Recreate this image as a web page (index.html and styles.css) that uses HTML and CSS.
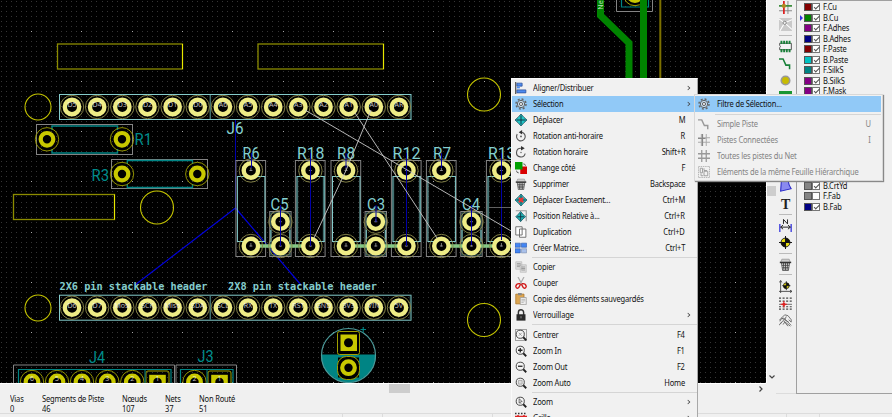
FILE: index.html
```html
<!DOCTYPE html>
<html lang="fr">
<head>
<meta charset="utf-8">
<title>Pcbnew</title>
<link rel="stylesheet" href="styles.css">
</head>
<body>
<svg class="defs" width="0" height="0">
  <symbol id="gear" viewBox="0 0 16 16"><circle cx="8" cy="8" r="6.700" fill="none" stroke="#666" stroke-width="2" stroke-dasharray="2.630 2.630"/><circle cx="8" cy="8" r="4.900" fill="#e4e4e4" fill-opacity=".6" stroke="#555" stroke-width="1.2"/><circle cx="8" cy="8" r="2.100" fill="#f0f0f0" stroke="#555" stroke-width="1.2"/></symbol>
  <symbol id="align" viewBox="0 0 16 16"><path d="M1 0V16" stroke="#333" stroke-width="1.4"/><path d="M2.500 1.500h7v4h-7zM2.500 10.500h12v4h-12z" fill="#4d8bf0" stroke="#2c4f96"/><path d="M2.500 7.500h4" stroke="#4d8bf0" stroke-width="2"/></symbol>
  <symbol id="move" viewBox="0 0 16 16"><path d="M8 0l4 4.500L16 8l-4 3.500L8 16l-4-4.500L0 8l4-3.500z" fill="#22c5c5" stroke="#145" stroke-width="1"/><path d="M8 2v12M2 8h12" stroke="#134" stroke-width="1.3"/></symbol>
  <symbol id="movex" viewBox="0 0 16 16"><use href="#move"/><path d="M5 5l6 6M11 5l-6 6" stroke="#e33" stroke-width="2.4"/></symbol>
  <symbol id="movrel" viewBox="0 0 16 16"><path d="M1 1h14v14" fill="none" stroke="#999" stroke-width="1.5"/><path d="M7.500 2l3 3.500L14 9l-3.500 3-3 3.500-3-3.500L1 9l3.500-3.500z" fill="#22b5b5" stroke="#145"/><path d="M7.500 4v10M3 9h9" stroke="#134" stroke-width="1.2"/></symbol>
  <symbol id="ccw" viewBox="0 0 16 16"><path d="M3 5.500A5.800 5.800 0 1 0 9 3" fill="none" stroke="#555" stroke-width="1.5"/><path d="M9.500 0v6L5 3z" fill="#333"/><circle cx="8" cy="8.500" r="1.200" fill="#555"/></symbol>
  <symbol id="cw" viewBox="0 0 16 16"><path d="M8 3A5.800 5.800 0 1 0 13.500 10" fill="none" stroke="#555" stroke-width="1.5"/><path d="M8 0v6l5-3z" fill="#333"/><circle cx="8" cy="8.500" r="1" fill="#666"/></symbol>
  <symbol id="flip" viewBox="0 0 16 16"><path d="M7 6h9v10H7z" fill="#d80000"/><path d="M0 0h10v10H0z" fill="#00a000"/><path d="M11 2.500q3 0 3 2.500M2 11.500q0 3 3 3" fill="none" stroke="#333"/></symbol>
  <symbol id="trash" viewBox="0 0 16 16"><path d="M2 5.500L3.500 1.500h9L14 5.500z" fill="#ccc" stroke="#999"/><path d="M3 6h10l-1.500 9.500h-7z" fill="#e8e8e8" stroke="#444"/><path d="M1 5.500h14" stroke="#333" stroke-width="1.8"/><path d="M5.500 6l.6 9M8 6v9M10.500 6l-.6 9M3.500 9h9M4 12h8" stroke="#444" stroke-width="1.1"/></symbol>
  <symbol id="dup" viewBox="0 0 16 16"><path d="M1 1h8.500v11H1zM6 4h8.500v11H6z" fill="#fff" stroke="#666" stroke-width="1.2"/></symbol>
  <symbol id="array" viewBox="0 0 16 16"><path d="M0 1.500h7v5.500H0zM8.500 1.500h7v5.500h-7zM0 9h7v5.500H0z" fill="#4285f4" stroke="#2a56a8" stroke-width=".8"/><path d="M8.500 9h7v5.500h-7z" fill="#a9c0ea" stroke="#7788aa" stroke-width=".8"/></symbol>
  <symbol id="copy" viewBox="0 0 16 16"><path d="M1 1h8v10H1zM7 5h8v10H7z" fill="#ddd" stroke="#bbb"/><path d="M2.500 3.500h5M2.500 5.500h5M2.500 7.500h4M8.500 8h5M8.500 10h5M8.500 12h5" stroke="#888"/></symbol>
  <symbol id="cut" viewBox="0 0 16 16"><path d="M4 0l5.500 10M12 0L6.500 10" stroke="#aaa" stroke-width="1.6"/><path d="M7 9q-5-1-6 3.500 1 4 4 1.500L7.500 9.500M9 9q5-1 6 3.500-1 4-4 1.500L8.500 9.500" fill="none" stroke="#d01818" stroke-width="1.8"/></symbol>
  <symbol id="paste" viewBox="0 0 16 16"><path d="M1 1.500h11v13H1z" fill="#dca550" stroke="#a87428"/><path d="M4 0h5v3H4z" fill="#888"/><path d="M7 6h8v9.500H7z" fill="#eee" stroke="#999"/><path d="M8.500 8.500h5M8.500 10.500h5M8.500 12.500h3" stroke="#aaa"/></symbol>
  <symbol id="lock" viewBox="0 0 16 16"><path d="M4.500 8V4.500a3.500 3.500 0 0 1 7 0V8" fill="none" stroke="#333" stroke-width="1.9"/><path d="M2 7h12v8.500H2z" fill="#2a2a2a"/><path d="M8 9.500v3" stroke="#999" stroke-width="1.2"/></symbol>
  <symbol id="lens" viewBox="0 0 16 16"><circle cx="7" cy="7" r="5.400" fill="#f4f4f4" stroke="#444" stroke-width="1.300"/><path d="M11 11l4 4" stroke="#222" stroke-width="2.400"/></symbol>
  <symbol id="zcenter" viewBox="0 0 16 16"><path d="M.5.500h15v15H.5z" fill="none" stroke="#777"/><use href="#lens"/><path d="M5 5l4 4M9 5l-4 4" stroke="#888"/></symbol>
  <symbol id="zin" viewBox="0 0 16 16"><use href="#lens"/><path d="M4 7h6M7 4v6" stroke="#222" stroke-width="1.700"/></symbol>
  <symbol id="zout" viewBox="0 0 16 16"><use href="#lens"/><path d="M4 7h6" stroke="#222" stroke-width="1.700"/></symbol>
  <symbol id="zauto" viewBox="0 0 16 16"><use href="#lens"/><path d="M4.500 4.500h5v5h-5z" fill="#ddd" stroke="#999"/></symbol>
  <symbol id="zsel" viewBox="0 0 16 16"><use href="#lens"/><path d="M5.500 3.500v6l1.500-1.200 1 2M5.500 3.500l4 4H7.500" fill="none" stroke="#444"/></symbol>
  <symbol id="gridred" viewBox="0 0 16 16"><path d="M0 2h16" stroke="#333" stroke-width="2" stroke-dasharray="2 2"/><path d="M0 6h16M4 4v10M12 4v10" stroke="#d22" stroke-width="2"/></symbol>
  <symbol id="seg" viewBox="0 0 16 16"><path d="M0 2.500h5l3.500 7.500h4.500v5" fill="none" stroke="currentColor" stroke-width="1.900"/></symbol>
  <symbol id="cross" viewBox="0 0 16 16"><path d="M4.500 0v16M0 11h16M11 0v16M0 5h16" stroke="#aaa" stroke-width="1.300"/><path d="M6 0v16M0 6h10" stroke="#888" stroke-width="1.600"/></symbol>
  <symbol id="hash" viewBox="0 0 16 16"><path d="M5 0v16M11 0v16M0 5h16M0 11h16" stroke="#999" stroke-width="1.700"/></symbol>
  <symbol id="sheet" viewBox="0 0 16 16"><path d="M.5.500h15v15H.5z" fill="none" stroke="#999" stroke-dasharray="2 1"/><path d="M3 3h3v6H3zM8 7h5v6H8zM8 3v3h4M4 10v3h3" fill="none" stroke="#999" stroke-width="1.200"/></symbol>
</svg>

<div class="window">
  <div class="workspace">
    <div class="editor">
      <svg id="board" class="board" width="766" height="383" viewBox="0 0 766 383"></svg>
      <div class="hscroll"><span class="hthumb"></span><svg class="arrow-r" viewBox="0 0 6 6"><path d="M1.500 .5L4 3 1.500 5.500" fill="none" stroke="#444" stroke-width="1.200"/></svg></div>
    </div>
    <div class="vscroll"><span class="vthumb"></span><svg class="arrow-d" viewBox="0 0 6 6"><path d="M.5 1.500L3 4 5.500 1.500" fill="none" stroke="#444" stroke-width="1.200"/></svg></div>
    <div class="tools">
      <svg class="tool" viewBox="0 0 16 16"><path d="M0 6h16M0 12h16M11 0v16" stroke="#888" stroke-width="1.200"/><path d="M6 0v16" stroke="#d22" stroke-width="2.200"/><path d="M0 6h16" stroke="#2a8a2a" stroke-width="1.800"/><circle cx="6" cy="6" r="2.600" fill="#b08a20"/></svg>
      <svg class="tool t-rats" viewBox="0 0 16 16"><path d="M0 0h16v16H0z" fill="#cacaca"/><path d="M7 6L0 1M7 6l9-4M7 6L1 16M7 6l9 8" stroke="#fff" stroke-width="1.300"/><circle cx="7" cy="6" r="2" fill="#eee" stroke="#777"/></svg>
      <i class="rule r1"></i>
      <svg class="tool t-chip" viewBox="0 0 16 16"><path d="M.8 4h14.400v8H.8V9.500q2-1.500 0-3z" fill="#f4f4f4" stroke="#555" stroke-width="1.200"/><path d="M3 1v4M6.300 1v4M9.600 1v4M13 1v4M3 11v4M6.300 11v4M9.600 11v4M13 11v4" stroke="#188038" stroke-width="2.300"/></svg>
      <svg class="tool t-seg" viewBox="0 0 16 16"><use href="#seg"/></svg>
      <svg class="tool t-via" viewBox="0 0 16 16"><circle cx="8" cy="8" r="5.200" fill="#c8bc00" stroke="#999" stroke-width="2"/></svg>
      <svg class="tool t-zone" viewBox="0 0 16 16"><path d="M0 0h16v16H0z" fill="#1a9632"/><path d="M3 6l5-2 5 3v9H3z" fill="#bde0c0"/></svg>
      <svg class="tool t-poly" viewBox="0 0 16 16"><path d="M3 1h8q1 7 4 11L2 15z" fill="#8a8af0" stroke="#2828c8" stroke-width="1.300"/></svg>
      <b class="t-text">T</b>
      <i class="rule r2"></i>
      <svg class="tool t-dim" viewBox="0 0 16 16"><path d="M1 6v10M15 6v10" stroke="#4c4ce0" stroke-width="1.800"/><path d="M2 10h12M5 7.500L2 10l3 2.500M11 7.500l3 2.500-3 2.500" fill="none" stroke="#222" stroke-width="1.200"/><path d="M5.500 6V.5l5 5.500V.5" fill="none" stroke="#222" stroke-width="1.200"/></svg>
      <svg class="tool t-target" viewBox="0 0 16 16"><circle cx="8" cy="8" r="5.500" fill="#e8dc10" stroke="#222" stroke-width="1.200"/><path d="M8 8V2.500A5.500 5.500 0 0 1 13.500 8zM8 8v5.500A5.500 5.500 0 0 1 2.500 8z" fill="#111"/><path d="M8 0v16M0 8h16" stroke="#111" stroke-width="1.200"/></svg>
      <i class="rule r3"></i>
      <svg class="tool t-trash" viewBox="0 0 16 16"><use href="#trash"/></svg>
      <i class="rule r4"></i>
      <svg class="tool t-axis" viewBox="0 0 16 16"><path d="M2 16V1M0 14h16M.5 3L2 .5 3.500 3M13.500 12.500L16 14l-2.500 1.500" fill="none" stroke="#444" stroke-width="1.100"/><circle cx="9" cy="7" r="3.600" fill="#e8dc10" stroke="#222"/><path d="M9 7V3.400A3.600 3.600 0 0 1 12.600 7zM9 7v3.600A3.600 3.600 0 0 1 5.400 7z" fill="#111"/><path d="M9 1.500v11M4 7h10" stroke="#111"/></svg>
      <svg class="tool t-grid" viewBox="0 0 16 16"><path d="M0 1.500h16M0 5h16M0 12h16M0 15h16" stroke="#444" stroke-width="1.500" stroke-dasharray="2.500 1.900"/><path d="M0 9h16" stroke="#555"/><path d="M2 9h8M6 5v8" stroke="#e02020" stroke-width="1.300"/><circle cx="6" cy="9" r="2" fill="#e02020"/></svg>
      <svg class="tool t-hand" viewBox="0 0 16 16"><path d="M0 8L7 1l4 1 4 5v3l-3-3M1 9q1-4 5-4l9 9M2 12l3-4 9 7M5 13l2-3 4 5M3 5l9 5M9 3l-2 4M0 14l3-4" fill="none" stroke="#666" stroke-width="1.100"/></svg>
    </div>
    <div class="layers">
      <div class="layer"><i class="sw c-red"></i><i class="cb on"></i><span>F.Cu</span></div>
      <div class="layer current"><i class="sw c-green"></i><i class="cb on"></i><span>B.Cu</span></div>
      <div class="layer"><i class="sw c-purple"></i><i class="cb on"></i><span>F.Adhes</span></div>
      <div class="layer"><i class="sw c-navy"></i><i class="cb on"></i><span>B.Adhes</span></div>
      <div class="layer"><i class="sw c-red"></i><i class="cb on"></i><span>F.Paste</span></div>
      <div class="layer"><i class="sw c-cyan"></i><i class="cb on"></i><span>B.Paste</span></div>
      <div class="layer"><i class="sw c-teal"></i><i class="cb on"></i><span>F.SilkS</span></div>
      <div class="layer"><i class="sw c-purple"></i><i class="cb on"></i><span>B.SilkS</span></div>
      <div class="layer"><i class="sw c-purple"></i><i class="cb on"></i><span>F.Mask</span></div>
      <div class="layer after-gap"><i class="sw c-grey"></i><i class="cb on"></i><span>B.CrtYd</span></div>
      <div class="layer"><i class="sw c-grey"></i><i class="cb"></i><span>F.Fab</span></div>
      <div class="layer"><i class="sw c-navy"></i><i class="cb on"></i><span>B.Fab</span></div>
    </div>
  </div>
  <div class="messages">
    <div class="msg m1"><span>Vias</span><span>0</span></div>
    <div class="msg m2"><span>Segments de Piste</span><span>46</span></div>
    <div class="msg m3"><span>Nœuds</span><span>107</span></div>
    <div class="msg m4"><span>Nets</span><span>37</span></div>
    <div class="msg m5"><span>Non Routé</span><span>51</span></div>
  </div>
  <div class="status"><i class="s1"></i><i class="s2"></i><i class="s3"></i><i class="s4"></i><i class="s5"></i></div>
</div>

<div class="menu main-menu">
  <div class="item"><svg class="ic"><use href="#align"/></svg><span>Aligner/Distribuer</span><i class="more"></i></div>
  <div class="item hot"><svg class="ic"><use href="#gear"/></svg><span>Sélection</span><i class="more"></i></div>
  <div class="item"><svg class="ic"><use href="#move"/></svg><span>Déplacer</span><kbd>M</kbd></div>
  <div class="item"><svg class="ic"><use href="#ccw"/></svg><span>Rotation anti-horaire</span><kbd>R</kbd></div>
  <div class="item"><svg class="ic"><use href="#cw"/></svg><span>Rotation horaire</span><kbd>Shift+R</kbd></div>
  <div class="item"><svg class="ic"><use href="#flip"/></svg><span>Change côté</span><kbd>F</kbd></div>
  <div class="item"><svg class="ic"><use href="#trash"/></svg><span>Supprimer</span><kbd>Backspace</kbd></div>
  <div class="item"><svg class="ic"><use href="#movex"/></svg><span>Déplacer Exactement...</span><kbd>Ctrl+M</kbd></div>
  <div class="item"><svg class="ic"><use href="#movrel"/></svg><span>Position Relative à...</span><kbd>Ctrl+R</kbd></div>
  <div class="item"><svg class="ic"><use href="#dup"/></svg><span>Duplication</span><kbd>Ctrl+D</kbd></div>
  <div class="item"><svg class="ic"><use href="#array"/></svg><span>Créer Matrice...</span><kbd>Ctrl+T</kbd></div>
  <div class="sep"></div>
  <div class="item"><svg class="ic"><use href="#copy"/></svg><span>Copier</span></div>
  <div class="item"><svg class="ic"><use href="#cut"/></svg><span>Couper</span></div>
  <div class="item"><svg class="ic"><use href="#paste"/></svg><span>Copie des éléments sauvegardés</span></div>
  <div class="item"><svg class="ic"><use href="#lock"/></svg><span>Verrouillage</span><i class="more"></i></div>
  <div class="sep"></div>
  <div class="item"><svg class="ic"><use href="#zcenter"/></svg><span>Centrer</span><kbd>F4</kbd></div>
  <div class="item"><svg class="ic"><use href="#zin"/></svg><span>Zoom In</span><kbd>F1</kbd></div>
  <div class="item"><svg class="ic"><use href="#zout"/></svg><span>Zoom Out</span><kbd>F2</kbd></div>
  <div class="item"><svg class="ic"><use href="#zauto"/></svg><span>Zoom Auto</span><kbd>Home</kbd></div>
  <div class="sep"></div>
  <div class="item"><svg class="ic"><use href="#zsel"/></svg><span>Zoom</span><i class="more"></i></div>
  <div class="item"><svg class="ic"><use href="#gridred"/></svg><span>Grille</span><i class="more"></i></div>
</div>

<div class="menu sub-menu">
  <div class="item hot"><svg class="ic"><use href="#gear"/></svg><span>Filtre de Sélection...</span></div>
  <div class="sep"></div>
  <div class="item off"><svg class="ic"><use href="#seg"/></svg><span>Simple Piste</span><kbd>U</kbd></div>
  <div class="item off"><svg class="ic"><use href="#cross"/></svg><span>Pistes Connectées</span><kbd>I</kbd></div>
  <div class="item off"><svg class="ic"><use href="#hash"/></svg><span>Toutes les pistes du Net</span></div>
  <div class="item off"><svg class="ic"><use href="#sheet"/></svg><span>Eléments de la même Feuille Hiérarchique</span></div>
</div>
<script src="board.js"></script>
</body>
</html>
```

FILE: styles.css
```css
* { box-sizing: border-box; }
html, body { margin: 0; overflow: hidden; }
body { width: 892px; height: 417px; position: relative; background: #f0f0f0; font-family: "Noto Sans", "Open Sans", sans-serif; font-size: 8.4px; letter-spacing: -.2px; color: #111; }
i { font-style: normal; display: block; }
.defs { position: absolute; }
.window { display: flex; flex-direction: column; height: 417px; }
.workspace { display: flex; height: 394px; }
.editor { width: 766px; flex: none; }
.board { display: block; background: #000; letter-spacing: 0; }
.hscroll { display: flex; height: 11px; border-top: 1px solid #fff; justify-content: space-between; align-items: center; padding: 0 2px 1px 389px; }
.hthumb { width: 21px; height: 9px; background: #cdcdcd; }
.arrow-r, .arrow-d { width: 6px; height: 6px; display: block; }
.vscroll { width: 10px; height: 383px; flex: none; display: flex; flex-direction: column; justify-content: space-between; align-items: center; padding: 186px 0 3px; border-left: 1px solid #fff; }
.vthumb { width: 9px; height: 10px; background: #cdcdcd; }

.tools { width: 20px; flex: none; padding: 1px 0 0 3px; color: #188038; border-bottom: 1px solid #dcdcdc; }
.tool { display: block; width: 13px; height: 13px; }
.t-rats { margin-top: 4px; }
.rule { width: 13px; height: 1px; background: #bbb; }
.r1 { margin-top: 4px; }
.t-chip { margin-top: 4px; }
.t-seg { margin-top: 4px; }
.t-via { margin-top: 4px; }
.t-zone { margin-top: 4px; }
.t-poly { margin-top: 75px; }
.t-text { display: block; width: 13px; height: 14px; margin-top: 4px; font: bold 14px/14px "Liberation Serif", serif; text-align: center; color: #222; transform: translateY(2px); }
.r2 { margin-top: 4px; }
.t-dim { margin-top: 4px; }
.t-target { margin-top: 4px; }
.r3 { margin-top: 4px; }
.t-trash { margin-top: 4px; }
.r4 { margin-top: 3px; }
.t-axis { margin-top: 5px; }
.t-grid { margin-top: 4px; }
.t-hand { margin-top: 4px; }

.layers { flex: 1; border: solid #a0a0a0; border-width: 1px 0 1px 1px; padding: 1px 0 0 7px; }
.layer { display: flex; align-items: center; height: 10.5px; position: relative; white-space: nowrap; }
.layer.after-gap { margin-top: 84px; }
.layer span { margin-left: 3px; line-height: 10px; }
.layer span, .item span, .msg span { transform: scaleX(.9); transform-origin: left center; }
.layer.current::before { content: ""; position: absolute; left: -4px; top: 2px; border: 3px solid transparent; border-left: 3.500px solid #3030e8; border-right: 0; }
.sw { width: 8px; height: 8px; border: 1px solid #555; }
.c-red { background: #840000; } .c-green { background: #008400; } .c-purple { background: #840084; }
.c-navy { background: #000084; } .c-cyan { background: #00c2c2; } .c-teal { background: #008484; } .c-grey { background: #848484; }
.cb { width: 8px; height: 8px; background: #fff; border: 1px solid #777; position: relative; }
.cb.on::after { content: ""; position: absolute; left: .5px; top: .8px; width: 4.500px; height: 2.200px; border: solid #555; border-width: 0 0 1px 1px; transform: rotate(-45deg); }

.messages { display: flex; height: 19px; }
.msg { display: flex; flex-direction: column; line-height: 10px; flex: none; white-space: nowrap; }
.m1 { margin-left: 9.500px; width: 32.500px; } .m2 { width: 79.500px; } .m3 { width: 43px; } .m4 { width: 34px; }
.status { display: flex; height: 4px; border-top: 1px solid #dcdcdc; }
.status i { width: 1px; height: 3px; background: #dcdcdc; }
.s1 { margin-left: 342px; } .s2 { margin-left: 39px; } .s3 { margin-left: 109px; } .s4 { margin-left: 293px; } .s5 { margin-left: 32px; }

.menu { position: absolute; background: #f1f1f1; border: 1px solid #fafafa; }
.main-menu { left: 511px; top: 78px; width: 187px; height: 345px; padding-top: 1px; border-right: 1px solid #a8a8a8; }
.sub-menu { left: 694px; top: 94px; width: 189px; height: 87px; padding: 1px 1px 0 0; border-color: #d8d8d8; box-shadow: 1px 1px 1px #888; }
.item { display: flex; align-items: center; height: 16px; line-height: 12px; padding: 0 12px 0 3px; white-space: nowrap; }
.item.hot { background: #91c9f7; }
.item.off { color: #838383; }
.ic { width: 12px; height: 12px; flex: none; margin-right: 6px; }
.sub-menu .ic { margin-right: 6.500px; }
.item kbd { margin-left: auto; font: inherit; transform: scaleX(.9); transform-origin: right center; }
.sub-menu .item { padding-right: 10px; }
.sub-menu .off .ic { color: #999; }
.more { margin-left: auto; margin-right: -5px; width: 4px; height: 4px; border: solid #444; border-width: 1px 1px 0 0; transform: rotate(45deg) scale(.8); }
.sep { height: 1px; margin: 1px 0 1.300px 20px; background: #d5d5d5; }
.sub-menu .sep { margin: 1.500px 0 1px 20px; }

.hd { font-family: "DejaVu Sans Mono", monospace; font-weight: bold; font-size: 11px; fill: #84cccc; }
.ref { font-family: Roboto, sans-serif; font-size: 16px; fill: #84d0d0; }
.ref.dim { fill: #008c8c; }
.net { font: 7px "Noto Sans", sans-serif; fill: #fff; fill-opacity: .75; text-anchor: middle; }
```

FILE: board.js
```js
const out = [];
const line = (d, c, w = 1, extra = '') => out.push(`<path d="${d}" fill="none" stroke="${c}" stroke-width="${w}" ${extra}/>`);
const rect = (x1, y1, x2, y2, c, w = 1) => out.push(`<rect x="${x1}" y="${y1}" width="${x2 - x1}" height="${y2 - y1}" fill="none" stroke="${c}" stroke-width="${w}"/>`);
const ring = (x, y, r, c, w = 1) => out.push(`<circle cx="${x}" cy="${y}" r="${r}" fill="none" stroke="${c}" stroke-width="${w}"/>`);
const text = (x, y, s, cls, len) => out.push(`<text x="${x}" y="${y}" class="${cls}" ${len ? `textLength="${len}" lengthAdjust="spacingAndGlyphs"` : ''}>${s}</text>`);
const PALE = '#eeec86', YEL = '#c8c800', SILK = '#84cccc', TEAL = '#008484', CRT = '#848484';

// Grid: every tenth point is brighter
const pitch = 5.029;
let dim = '', lit = '';
for (let i = -6; i < 147; i++) for (let j = -6; j < 71; j++) {
  const d = `M${Math.floor(31.6 + i * pitch)} ${Math.floor(31.4 + j * 5.018)}h1v1h-1z`;
  if (i % 10 === 0 && j % 10 === 0) lit += d; else dim += d;
}
out.push(`<path d="${dim}" fill="#353535"/><path d="${lit}" fill="#a8a8a8"/>`);

function brightPad(x, y, net) {
  ring(x, y, 11.7, '#8c8a4c', .9);
  out.push(`<circle cx="${x}" cy="${y}" r="7.2" fill="#000" stroke="${PALE}" stroke-width="4.4"/>`);
  if (net) text(x, y, net, 'net'); else line(`M${x} ${y - 3}v3.500M${x - 1.5} ${y}h3`, '#999', .8);
}
function pad(x, y, num) {
  ring(x, y, 11.7, '#a0a000', .9);
  out.push(`<circle cx="${x}" cy="${y}" r="6.3" fill="#000" stroke="${YEL}" stroke-width="4.2"/>`);
  if (num) text(x, y - 1, num, 'net');
}

// Board cutouts and mounting holes
[[57.5, 44, 182.5, 69], [258, 44, 383.500, 69], [13.5, 194.5, 114.5, 219.5]].forEach(([a, b, c, d]) => {
  rect(a, b, c, d, '#8c8c00', 1.3);
  line(`M${c} ${b}V${d}`, '#e8e800');
});
[[38, 107, 13], [38, 308, 13], [157, 207.5, 16.5], [484, 94.5, 16.5], [484, 320, 16.5]].forEach(c => ring(...c, '#c4c400', 1.1));

// Tracks
line('M616.500 0V11.500H652.500V0', CRT);
line('M621.500 0V7H648.500V0', TEAL, 1.2);
ring(635, -6, 11.7, '#a0a000');
ring(635, -6, 7, YEL, 4);
line('M600.5 0V15.500L629 43V80M643.500 0V80', '#008400', 7);
line('M660.300 0V80', '#7c7000', 2);
out.push('<text transform="translate(603 5) rotate(-90)" class="net">Ne</text>');

// Ratsnest under the footprints
line('M235.500 120V208M235.500 208V208.500', '#0000b0', 1);
line('M235.500 208L135 285M235.500 208L301 285', '#0000d8', 1.2);

// Connector rows
const rows = [
  [107, ['D5', 'D4', 'D3', 'D2', 'D1', 'D0', 'A6', 'A5', 'A4', 'A3', 'A2', 'A1', 'A0', 'AR']],
  [307.7, ['D6', 'D7', 'Mosi', 'SCK', 'Miso', 'SDA', 'SCL', 'RX', 'TX', 'RST', 'GND', '3V3', 'VIN', '5V']]
];
rows.forEach(([y, nets]) => {
  rect(59.5, y - 12.5, 411, y + 12.5, SILK);
  line(`M210.300 ${y - 12}v24M410.500 ${y - 12}v24`, '#427070', 1.5);
  nets.forEach((n, i) => brightPad(72 + i * 25.15, y, n));
});

// Resistors
[[250.9, 'R6', 242.5, 17], [310.4, 'R18', 297, 27.5], [346, 'R8', 337, 18], [406.4, 'R12', 392.5, 28], [441.4, 'R7', 433, 18], [501.4, 'R13', 488, 27.5]].forEach(([x, name, tx, w], i) => {
  rect(x - 15, 160.5, x + 14.700, 256.5, CRT);
  rect(x - 13.5, 176.5, x + 14, 241.5, SILK);
  if (i % 2) line(`M${x - 13} 177v64M${x + 13.200} 177v64`, '#427070', 1.5);
  text(tx, 158.5, name, 'ref', w);
});
[[280.4, 'C5', 270.5], [375.8, 'C3', 367], [471.5, 'C4', 462]].forEach(([x, name, tx]) => {
  rect(x - 10.7, 211.5, x + 10.700, 256.5, CRT);
  rect(x - 9.5, 213, x + 9.5, 255, '#427070');
  line(`M${x - 9.5} 230v12M${x + 9.5} 230v12`, SILK);
  text(tx, 210, name, 'ref', 18);
  brightPad(x, 221.7);
});
line('M251 246H310M346 246H406M441 246H511', '#84c884', 3.5);
[250.9, 310.4, 346, 406.4, 441.4, 501.4].forEach(x => { brightPad(x, 170.5); brightPad(x, 246); });
[280.4, 375.8, 471.5].forEach(x => brightPad(x, 246));
line('M251.500 153v15M310.500 153V246M346 153v15M406.500 153V246M441.500 153v15M501.500 153V240M280.500 205V246M376 205v17M471.500 205v40', '#0000a8', 1);
line('M305 110L512 231.500M355 113L437 238M371 110L346 170.500L314 238', '#c8c8c8', .9);
line('M489 207.500h22', '#777', .8);

text(226.5, 133.5, 'J6', 'ref', 17);
text(59.5, 289.5, '2X6 pin stackable header', 'hd', 148);
text(228, 290, '2X8 pin stackable header', 'hd', 149);

// Unselected footprints
rect(36.5, 124.5, 132.5, 154.5, CRT);
line('M52 130V126H117.500V130M52 149V153H117.500V149', TEAL, 1.4);
pad(47, 139.3); pad(122, 139.3);
text(134.5, 144.5, 'R1', 'ref dim', 17.5);
rect(111.5, 159.5, 207.5, 188.5, CRT);
line('M127.300 164V160.500H192.500V164M127.300 184V187.500H192.500V184', TEAL, 1.3);
pad(122, 174); pad(197.3, 174);
text(91.5, 180.5, 'R3', 'ref dim', 17.5);

function header(x1, x2, s1, s2, pads, name, tx, ty) {
  line(`M${x1} 383V365H${x2}V383`, CRT);
  line(`M${s1} 383V369.500H${s2}V383`, TEAL, 1.2);
  const last = pads.pop();
  pads.forEach((x, i) => pad(x, 382, String(pads.length + 1 - i)));
  out.push(`<rect x="${last - 11.5}" y="371" width="23" height="24" rx="2" fill="none" stroke="#a0a000"/><rect x="${last - 8.3}" y="374.800" width="16.600" height="17" fill="${YEL}"/><circle cx="${last}" cy="382" r="4.200" fill="#000"/>`);
  line(`M${last - 12.500} 370v13`, TEAL);
  text(last, 381, '1', 'net');
  text(tx, ty, name, 'ref dim', 16);
}
header(13.5, 174.5, 18.5, 171, [32, 57, 82, 107.3, 132.3, 157.5], 'J4', 89, 363);
header(176, 236.5, 180.5, 233, [194.5, 219.5], 'J3', 197.5, 362);

// Electrolytic capacitor
line('M321.500 355a27 27 0 0 0 54 0z', TEAL, 1, `style="fill:${TEAL}"`);
ring(348.5, 355.5, 27, '#4c9a9a', 1.2);
out.push(`<rect x="337.500" y="331.500" width="22" height="23" rx="2" fill="#000" stroke="#a0a000"/><rect x="340.500" y="334.500" width="16.500" height="16.500" fill="${YEL}"/><circle cx="348.500" cy="342.700" r="4.500"/><rect x="338" y="357.500" width="21" height="20"/>`);
out.push(`<rect x="337.500" y="356.500" width="22" height="23" rx="9" fill="#000" stroke="#a0a000"/>`);
out.push(`<circle cx="348.500" cy="367.700" r="6.300" fill="#000" stroke="${YEL}" stroke-width="4.200"/>`);
line('M360.500 329.500h5.500M363.200 327v5.500', TEAL, 1.1);

document.getElementById('board').innerHTML = out.join('');
```
